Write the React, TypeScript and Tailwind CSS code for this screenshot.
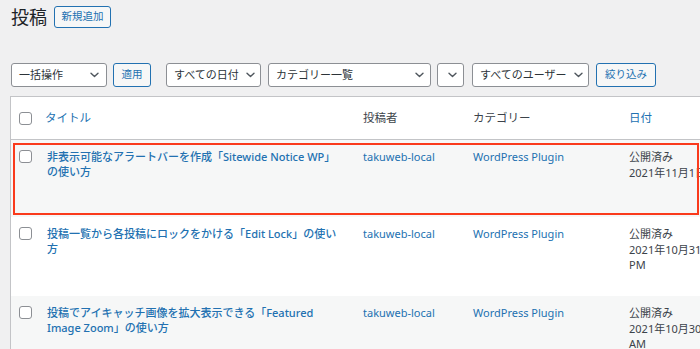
import type { ReactNode } from "react"

const Chevron = () => (
  <svg width="9" height="6" viewBox="0 0 9 6" fill="none">
    <path d="M1 1.2 L4.5 4.6 L8 1.2" stroke="#50575e" strokeWidth="1.4" strokeLinecap="round" strokeLinejoin="round" />
  </svg>
)

const Select = ({ label, className }: { label?: string; className: string }) => (
  <div
    className={`flex h-[24px] items-center justify-between rounded-[3px] border border-[#8c8f94] bg-white pl-[7px] text-[11px] whitespace-nowrap text-[#2c3338] ${className}`}
  >
    <span>{label}</span>
    <Chevron />
  </div>
)

const Checkbox = () => (
  <div className="ml-[8px] h-[13px] w-[13px] rounded-[3px] border border-[#8c8f94] bg-white" />
)

type Post = {
  title: ReactNode
  date: string[]
  bg: string
  height: string
  highlight?: boolean
}

const posts: Post[] = [
  {
    title: (
      <>
        非表示可能なアラートバーを作成「Sitewide Notice WP」
        <br />
        の使い方
      </>
    ),
    date: ["公開済み", "2021年11月1日 8:00 AM"],
    bg: "bg-[#f6f7f7]",
    height: "h-[77px]",
    highlight: true,
  },
  {
    title: (
      <>
        投稿一覧から各投稿にロックをかける「Edit Lock」の使い
        <br />
        方
      </>
    ),
    date: ["公開済み", "2021年10月31日 9:00", "PM"],
    bg: "bg-white",
    height: "h-[79px]",
  },
  {
    title: (
      <>
        投稿でアイキャッチ画像を拡大表示できる「Featured
        <br />
        Image Zoom」の使い方
      </>
    ),
    date: ["公開済み", "2021年10月30日 10:00", "AM"],
    bg: "bg-[#f6f7f7]",
    height: "h-[79px]",
  },
]

export default function App() {
  return (
    <div className="h-[349px] w-[700px] overflow-hidden bg-[#f0f0f1] font-['Noto_Sans','Noto_Sans_CJK_JP',sans-serif] text-[#1d2327]">
      {/* heading */}
      <div className="flex items-center pt-[6px] pl-[11px]">
        <h1 className="text-[18px] leading-[22px] font-normal text-[#1d2327]">投稿</h1>
        <button className="ml-[7px] h-[22px] w-[57px] rounded-[3px] border border-[#2271b1] bg-[#f6f7f7] text-[10.5px] text-[#2271b1]">
          新規追加
        </button>
      </div>

      {/* filters */}
      <div className="mt-[35px] flex items-center pl-[11px]">
        <Select label="一括操作" className="w-[96px] pr-[7px]" />
        <button className="ml-[6px] h-[24px] w-[38px] rounded-[3px] border border-[#2271b1] bg-[#f6f7f7] text-[10.5px] text-[#2271b1]">
          適用
        </button>
        <Select label="すべての日付" className="ml-[15px] w-[95px] pr-[5px]" />
        <Select label="カテゴリー一覧" className="ml-[7px] w-[163px] pr-[6px]" />
        <Select className="ml-[6px] w-[27px] pr-[6px]" />
        <Select label="すべてのユーザー" className="ml-[8px] w-[117px] pr-[5px]" />
        <button className="ml-[7px] h-[24px] w-[60px] rounded-[3px] border border-[#2271b1] bg-[#f6f7f7] text-[10.5px] text-[#2271b1]">
          絞り込み
        </button>
      </div>

      {/* table */}
      <div className="mt-[9px] ml-[10px] w-[720px] border-t border-l border-[#c3c4c7] bg-white">
        <div className="grid h-[43px] grid-cols-[27px_318px_110px_156px_1fr] items-center border-b border-[#c3c4c7] bg-white text-[11.5px]">
          <div className="flex items-center">
            <Checkbox />
          </div>
          <div className="pl-[7px] text-[#2271b1]">タイトル</div>
          <div className="pl-[7px] text-[#3c434a]">投稿者</div>
          <div className="pl-[7px] text-[#3c434a]">カテゴリー</div>
          <div className="pl-[7px] text-[#2271b1]">日付</div>
        </div>

        {posts.map((p, i) => (
          <div
            key={i}
            className={`relative grid grid-cols-[27px_318px_110px_156px_1fr] pt-[9px] text-[11px] leading-[15px] ${p.bg} ${p.height}`}
          >
            <div className="pt-[1px]">
              <Checkbox />
            </div>
            <div className="pl-[9px] font-medium whitespace-nowrap text-[#2271b1]">{p.title}</div>
            <div className="pl-[7px] text-[#2271b1]">takuweb-local</div>
            <div className="pl-[7px] text-[#2271b1]">WordPress Plugin</div>
            <div className="pl-[7px] leading-[15.5px] whitespace-nowrap text-[#3c434a]">
              {p.date.map((d) => (
                <div key={d}>{d}</div>
              ))}
            </div>
            {p.highlight && (
              <div className="pointer-events-none absolute top-[3px] left-[2px] h-[72px] w-[686px] border-2 border-[#fa3a1c]" />
            )}
          </div>
        ))}
      </div>
    </div>
  )
}
